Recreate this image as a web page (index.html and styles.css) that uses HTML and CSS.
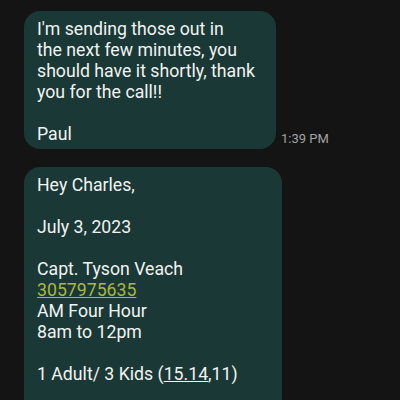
FILE: index.html
```html
<!DOCTYPE html>
<html lang="en">
<head>
  <meta charset="UTF-8">
  <meta name="viewport" content="width=device-width, initial-scale=1.0">
  <title>Messages</title>
  <link rel="stylesheet" href="styles.css">
</head>
<body>
  <div class="thread">
    <!-- first incoming message with its time -->
    <div class="message-row">
      <div class="bubble first">I'm sending those out in<br>the next few minutes, you<br>should have it shortly, thank<br>you for the call!!<br><br>Paul</div>
      <span class="time">1:39 PM</span>
    </div>

    <div class="message-row">
      <div class="bubble second">Hey Charles,<br><br>July 3, 2023<br><br>Capt. Tyson Veach<br><a class="phone" href="#">3057975635</a><br>AM Four Hour<br>8am to 12pm<br><br>1 Adult/ 3 Kids (<span class="num">15.14</span>,11)<br><br><br></div>
    </div>
  </div>
</body>
</html>
```

FILE: styles.css
```css
html, body {
  margin: 0;
  padding: 0;
  height: 100%;
  background-color: #141414;
  font-family: Roboto, "Noto Sans", sans-serif;
  overflow: hidden;
}
/* Message list */
.thread {
  display: flex;
  flex-direction: column;
  gap: 18px;
  padding: 11px 0 0 24px;
}
.message-row {
  display: flex;
  align-items: flex-end;
  gap: 5px;
}
.bubble {
  background: #1a3835;
  color: #f1f3f2;
  font-size: 17.7px;
  line-height: 21px;
  border-radius: 16px;
  padding: 8px 13px 4px 13px;
  box-sizing: border-box;
}
.bubble.first {
  width: 252px;
}
.bubble.second {
  width: 258px;
}
.phone {
  color: #a9b83c;
  text-decoration: underline;
}
.num {
  text-decoration: underline;
}
.time {
  font-size: 13px;
  color: #a3a3a3;
  padding-bottom: 3px;
}
```
